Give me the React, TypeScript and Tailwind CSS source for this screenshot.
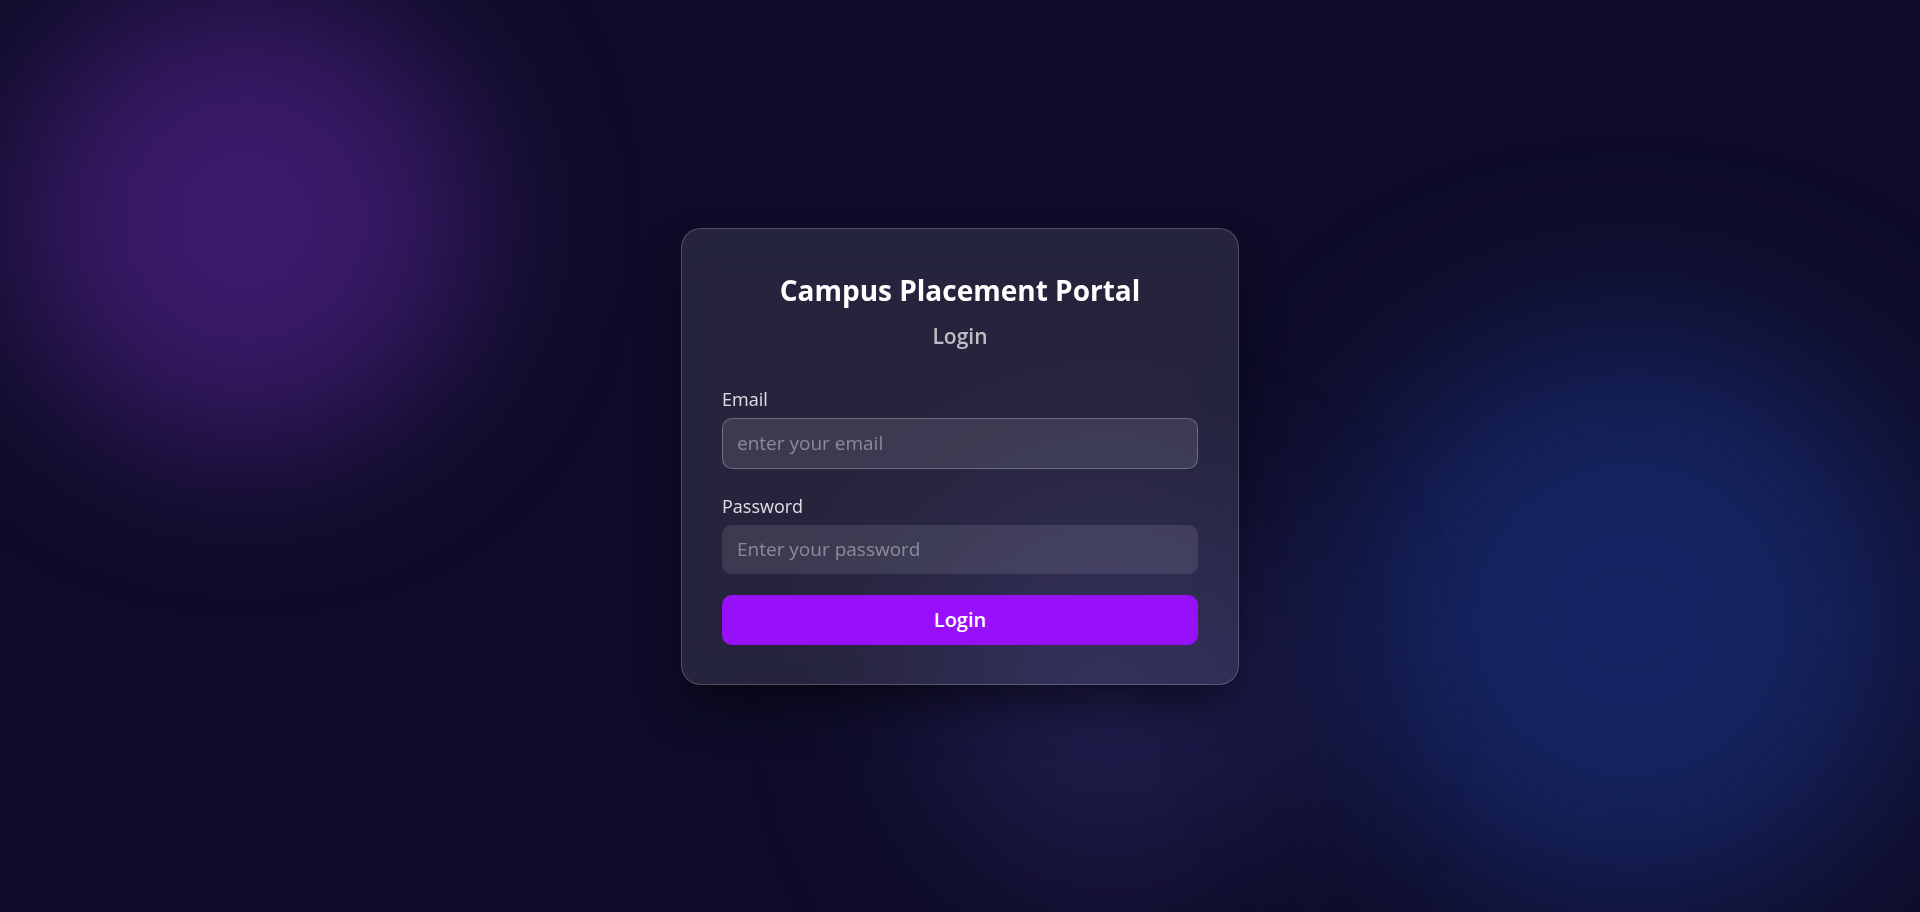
import React from "react";

// Login screen for the placement portal: a frosted card floating over soft coloured glows.
export default function App() {
  return (
    <div
      className="relative flex h-[912px] w-full items-center justify-center overflow-hidden bg-[#0e0c28]"
      style={{ fontFamily: '"Open Sans", "Noto Sans", sans-serif' }}
    >
      {/* background glows */}
      <div className="pointer-events-none absolute left-[15px] top-[-10px] h-[460px] w-[460px] rounded-full bg-[#4a1f80] opacity-75 blur-[80px]" />
      <div className="pointer-events-none absolute left-[1345px] top-[335px] h-[570px] w-[570px] rounded-full bg-[#172a6e] opacity-85 blur-[95px]" />
      <div className="pointer-events-none absolute left-[930px] top-[520px] h-[360px] w-[360px] rounded-full bg-[#2e2a6a] opacity-55 blur-[90px]" />

      <div className="relative z-10 w-[558px] rounded-[20px] border border-white/20 bg-white/10 px-10 pb-[39px] pt-[43px] shadow-[0_25px_50px_-12px_rgba(0,0,0,0.6)] backdrop-blur-xl">
        <h1 className="text-center text-[28px] font-bold leading-[36px] text-white">
          Campus Placement Portal
        </h1>
        <h2 className="mt-[14px] text-center text-[21px] font-semibold leading-[28px] text-white/70">
          Login
        </h2>

        <form className="mt-[37px] flex flex-col" onSubmit={(e) => e.preventDefault()}>
          <label className="text-[18px] leading-[24px] text-white/85">Email</label>
          <input
            type="email"
            placeholder="enter your email"
            className="mt-[7px] h-[51px] w-full rounded-[10px] border border-white/25 bg-white/10 px-[14px] text-[19px] text-white outline-none placeholder:text-white/40"
          />

          <label className="mt-[25px] text-[18px] leading-[24px] text-white/85">Password</label>
          <input
            type="password"
            placeholder="Enter your password"
            className="mt-[7px] h-[49px] w-full rounded-[10px] border border-transparent bg-white/10 px-[14px] text-[19px] text-white outline-none placeholder:text-white/40"
          />

          <button
            type="submit"
            className="mt-[21px] h-[50px] w-full rounded-[10px] bg-[#9810fa] text-[20px] font-semibold leading-[28px] text-white"
          >
            Login
          </button>
        </form>
      </div>
    </div>
  );
}
